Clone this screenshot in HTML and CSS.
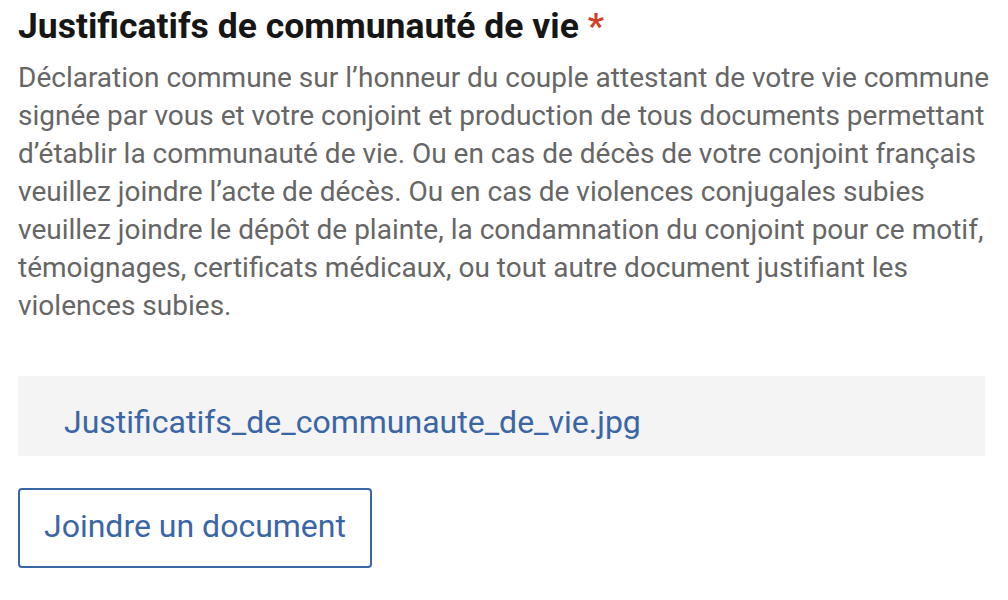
FILE: index.html
```html
<!DOCTYPE html>
<html lang="fr">
<head>
<meta charset="utf-8">
<link rel="stylesheet" href="styles.css">
</head>
<body>
<section class="field">
  <h2 class="field-title">Justificatifs de communauté de vie <span class="required">*</span></h2>
  <p class="field-help">Déclaration commune sur l’honneur du couple attestant de votre vie commune signée par vous et votre conjoint et production de tous documents permettant d’établir la communauté de vie. Ou en cas de décès de votre conjoint français veuillez joindre l’acte de décès. Ou en cas de violences conjugales subies veuillez joindre le dépôt de plainte, la condamnation du conjoint pour ce motif, témoignages, certificats médicaux, ou tout autre document justifiant les violences subies.</p>
  <div class="file-list">
    <a class="file-name" href="#">Justificatifs_de_communaute_de_vie.jpg</a>
  </div>
  <button class="btn-attach" type="button">Joindre un document</button>
</section>
</body>
</html>
```

FILE: styles.css
```css
html, body {
  margin: 0;
  padding: 0;
  background: #ffffff;
}
body {
  font-family: Roboto, "Liberation Sans", sans-serif;
}
.field {
  width: 972px;
  padding: 4px 0 0 18px;
}
.field-title {
  margin: 0;
  font-size: 35.5px;
  font-weight: 700;
  line-height: 44px;
  color: #161616;
}
.required {
  color: #cf3f2b;
}
.field-help {
  margin: 11px 0 0 0;
  font-size: 28px;
  line-height: 38px;
  color: #666666;
}
.file-list {
  margin-top: 51px;
  width: 967px;
  box-sizing: border-box;
  background: #f4f4f4;
  height: 80px;
  display: flex;
  align-items: center;
  padding: 12px 0 0 46px;
}
.file-name {
  font-size: 32px;
  color: #3b66a6;
  text-decoration: none;
}
.btn-attach {
  margin-top: 32px;
  height: 80px;
  padding: 0 24px 4px;
  border: 2px solid #3b66a6;
  border-radius: 4px;
  background: #ffffff;
  color: #3b66a6;
  font-family: Roboto, "Liberation Sans", sans-serif;
  font-size: 32px;
}
```
